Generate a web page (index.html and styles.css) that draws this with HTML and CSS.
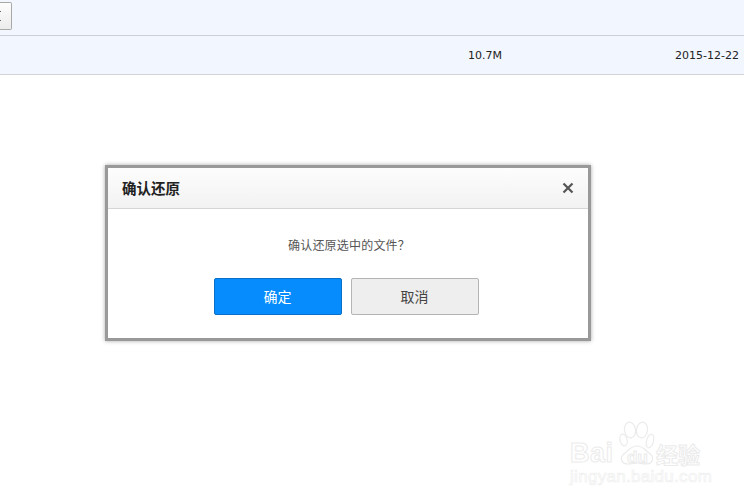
FILE: index.html
```html
<!DOCTYPE html>
<html lang="zh-CN">
<head>
<meta charset="utf-8">
<title>确认还原</title>
<link rel="stylesheet" href="styles.css">
</head>
<body>
<div class="toolbar"><span class="tool-btn"><i class="dot"></i><i class="dot"></i></span></div>
<div class="file-row">
  <span class="size">10.7M</span>
  <span class="date">2015-12-22</span>
</div>
<div class="dialog">
  <div class="dialog-head">
    <span class="dialog-title">确认还原</span>
    <svg class="close" width="12" height="12" viewBox="0 0 12 12"><path d="M1.5 1.5L10.5 10.5M10.5 1.5L1.5 10.5" stroke="#555" stroke-width="2.2" fill="none"/></svg>
  </div>
  <div class="dialog-body">
    <p class="message">确认还原选中的文件？</p>
    <div class="actions">
      <button class="btn btn-primary">确定</button>
      <button class="btn btn-default">取消</button>
    </div>
  </div>
</div>
<div class="watermark">
  <div class="wm-top">
    <span class="wm-bai">Bai</span>
    <svg class="wm-paw" width="36" height="44" viewBox="0 0 36 44" fill="none" stroke="#ebebeb" stroke-width="1.2">
      <ellipse cx="4.5" cy="19" rx="3.5" ry="6" transform="rotate(-15 4.5 19)"/>
      <ellipse cx="11" cy="9" rx="5.5" ry="8" transform="rotate(-8 11 9)"/>
      <ellipse cx="23" cy="9" rx="5.5" ry="8" transform="rotate(8 23 9)"/>
      <ellipse cx="31" cy="20" rx="3.5" ry="7" transform="rotate(15 31 20)"/>
      <path d="M18 25C12 25 10 29 6 32C0 36 2 43 9 43C13 43 15 42 18 42C21 42 23 43 27 43C34 43 36 36 30 32C26 29 24 25 18 25Z"/>
    </svg>
    <span class="wm-du">du</span>
    <span class="wm-jy">经验</span>
  </div>
  <div class="wm-url">jingyan.baidu.com</div>
</div>
</body>
</html>
```

FILE: styles.css
```css
html, body {
  margin: 0;
  padding: 0;
  width: 744px;
  height: 501px;
  overflow: hidden;
  background: #fff;
  font-family: "DejaVu Sans", "Noto Sans CJK SC", sans-serif;
}
.toolbar {
  box-sizing: content-box;
  height: 33px;
  padding-top: 2px;
  background: #f2f6fe;
  border-bottom: 1px solid #cdd0d6;
}
.tool-btn {
  display: flex;
  flex-direction: column;
  justify-content: center;
  gap: 8px;
  box-sizing: border-box;
  width: 12px;
  height: 28px;
  border: 1px solid #a8a8a8;
  border-left: 0;
  border-radius: 0 2px 2px 0;
  background: linear-gradient(#fdfdfd, #ececec);
}
.dot {
  display: block;
  width: 1px;
  height: 1px;
  background: #666;
}
.file-row {
  display: flex;
  align-items: center;
  height: 38px;
  background: #f2f6fe;
  border-bottom: 1px solid #d0d2d6;
  font-size: 11px;
  color: #222;
}
.size {
  margin-left: 468px;
}
.date {
  margin-left: auto;
  margin-right: 5px;
}
.dialog {
  position: absolute;
  left: 105px;
  top: 165px;
  width: 486px;
  height: 176px;
  box-sizing: border-box;
  border: 3px solid #999;
  background: #fff;
  box-shadow: 0 0 4px rgba(0, 0, 0, 0.35);
  font-family: "Noto Sans CJK SC", sans-serif;
}
.dialog-head {
  display: flex;
  align-items: center;
  justify-content: space-between;
  box-sizing: border-box;
  height: 41px;
  padding: 0 14px 2px 14px;
  background: linear-gradient(#fdfdfd, #f2f2f2);
  border-bottom: 1px solid #d5d5d5;
}
.dialog-title {
  font-size: 14.5px;
  font-weight: 700;
  color: #222;
}
.close {
  display: block;
  margin-top: 2px;
}
.dialog-body {
  display: flex;
  flex-direction: column;
  align-items: center;
}
.message {
  margin: 27px 0 0 2px;
  font-size: 12px;
  line-height: 18px;
  letter-spacing: 0.2px;
  color: #555;
}
.actions {
  display: flex;
  gap: 9px;
  margin: 24px 4px 0 0;
}
.btn {
  box-sizing: border-box;
  width: 128px;
  height: 37px;
  padding: 0 0 2px;
  border-radius: 2px;
  font-family: inherit;
  font-size: 14px;
}
.btn-primary {
  background: #068cfc;
  border: 1px solid #0a6fc8;
  color: #fff;
}
.btn-default {
  background: #eee;
  border: 1px solid #b4b4b4;
  color: #444;
}
.watermark {
  position: absolute;
  left: 570px;
  top: 421px;
}
.wm-top {
  position: relative;
  height: 47px;
}
.wm-bai, .wm-du, .wm-jy, .wm-url {
  position: absolute;
  color: transparent;
  -webkit-text-stroke: 1px #ebebeb;
  white-space: nowrap;
}
.wm-bai {
  left: 0;
  top: 15px;
  font: 700 27px/34px "Liberation Sans", sans-serif;
  letter-spacing: 0.5px;
}
.wm-paw {
  position: absolute;
  left: 49px;
  top: 0;
}
.wm-du {
  left: 57px;
  top: 28px;
  font: 700 17px/18px "Liberation Sans", sans-serif;
}
.wm-jy {
  left: 86px;
  top: 17px;
  font: 700 22px/30px "Noto Sans CJK SC", sans-serif;
}
.wm-url {
  position: relative;
  font: 400 17px/18px "Liberation Sans", sans-serif;
  letter-spacing: 0.3px;
  -webkit-text-stroke: 0.7px #efefef;
}
```
